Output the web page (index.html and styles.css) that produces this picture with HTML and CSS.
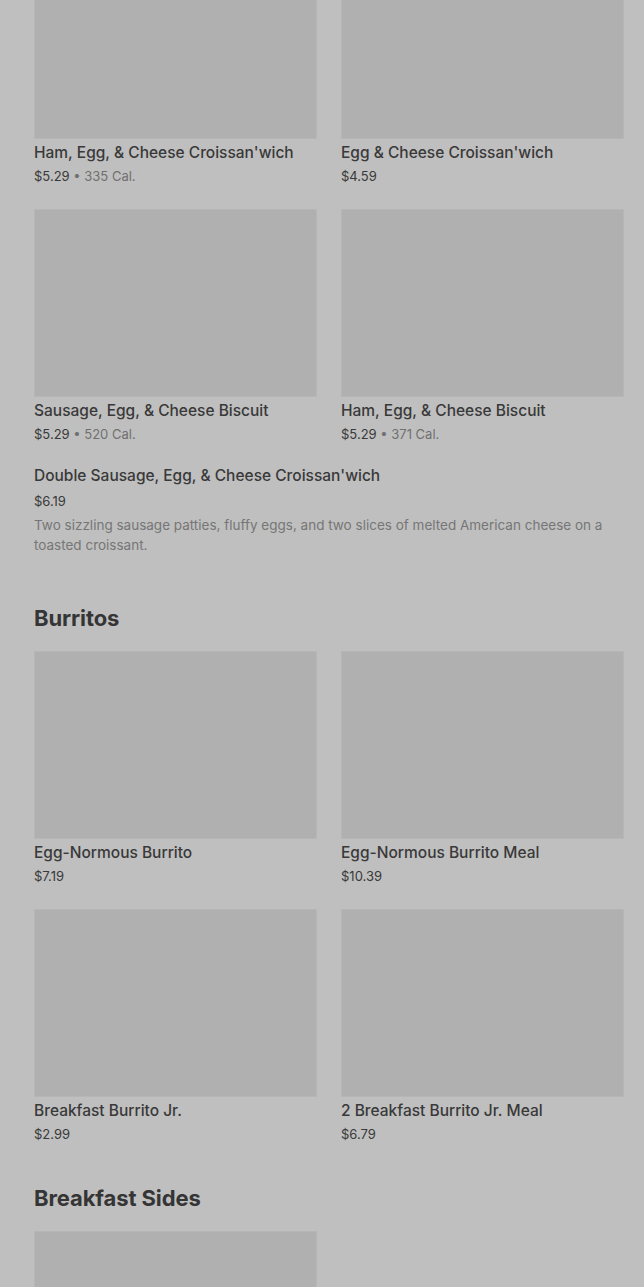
FILE: index.html
```html
<!DOCTYPE html>
<html lang="en">
<head>
  <meta charset="UTF-8" />
  <meta name="viewport" content="width=device-width, initial-scale=1.0"/>
  <title>Breakfast Menu</title>
  <link rel="stylesheet" href="styles.css">
</head>
<body>
  <div class="menu">
    <section class="section section-first">
      <div class="grid">
        <div class="card">
          <div class="thumb"></div>
          <div class="name">Ham, Egg, &amp; Cheese Croissan'wich</div>
          <div class="price">$5.29 <span class="cal">• 335 Cal.</span></div>
        </div>
        <div class="card">
          <div class="thumb"></div>
          <div class="name">Egg &amp; Cheese Croissan'wich</div>
          <div class="price">$4.59</div>
        </div>
        <div class="card">
          <div class="thumb"></div>
          <div class="name">Sausage, Egg, &amp; Cheese Biscuit</div>
          <div class="price">$5.29 <span class="cal">• 520 Cal.</span></div>
        </div>
        <div class="card">
          <div class="thumb"></div>
          <div class="name">Ham, Egg, &amp; Cheese Biscuit</div>
          <div class="price">$5.29 <span class="cal">• 371 Cal.</span></div>
        </div>
      </div>

      <div class="item">
        <div class="name">Double Sausage, Egg, &amp; Cheese Croissan'wich</div>
        <div class="price item-price">$6.19</div>
        <p class="desc">Two sizzling sausage patties, fluffy eggs, and two slices of melted American cheese on a toasted croissant.</p>
      </div>
    </section>

    <section class="section">
      <h2>Burritos</h2>
      <div class="grid">
        <div class="card">
          <div class="thumb"></div>
          <div class="name">Egg-Normous Burrito</div>
          <div class="price">$7.19</div>
        </div>
        <div class="card">
          <div class="thumb"></div>
          <div class="name">Egg-Normous Burrito Meal</div>
          <div class="price">$10.39</div>
        </div>
        <div class="card">
          <div class="thumb"></div>
          <div class="name">Breakfast Burrito Jr.</div>
          <div class="price">$2.99</div>
        </div>
        <div class="card">
          <div class="thumb"></div>
          <div class="name">2 Breakfast Burrito Jr. Meal</div>
          <div class="price">$6.79</div>
        </div>
      </div>
    </section>

    <section class="section">
      <h2>Breakfast Sides</h2>
      <div class="grid">
        <div class="card">
          <div class="thumb"></div>
        </div>
      </div>
    </section>
  </div>
</body>
</html>
```

FILE: styles.css
```css
body {
  margin: 0;
  background-color: #bfbfbf;
  font-family: Inter, "Noto Sans", Arial, sans-serif;
  color: #393939;
  overflow: hidden;
}
.menu {
  padding: 0 20px 0 34px;
  margin-top: -49px;
}
.section {
  margin-bottom: 39px;
}
.section-first {
  margin-bottom: 47px;
}
h2 {
  margin: 0 0 17px;
  font-size: 22px;
  line-height: 32px;
  font-weight: 700;
  letter-spacing: -0.1px;
  color: #353535;
}
.grid {
  display: grid;
  grid-template-columns: 1fr 1fr;
  column-gap: 24px;
  row-gap: 24px;
}
.thumb {
  height: 188px;
  background: #b0b0b0;
  box-shadow: inset 0 0 0 1px #b6b6b6;
}
.name {
  margin-top: 4px;
  font-size: 15.5px;
  line-height: 20px;
  font-weight: 500;
  color: #393939;
}
.price {
  margin-top: 4px;
  font-size: 13px;
  line-height: 18px;
  color: #393939;
}
.cal {
  color: #707070;
}
.item {
  margin-top: 23px;
}
.item .name {
  margin-top: 0;
}
.item-price {
  margin-top: 6px;
}
.desc {
  margin: 5px 0 0;
  font-size: 13.5px;
  line-height: 20px;
  color: #767676;
}
```
